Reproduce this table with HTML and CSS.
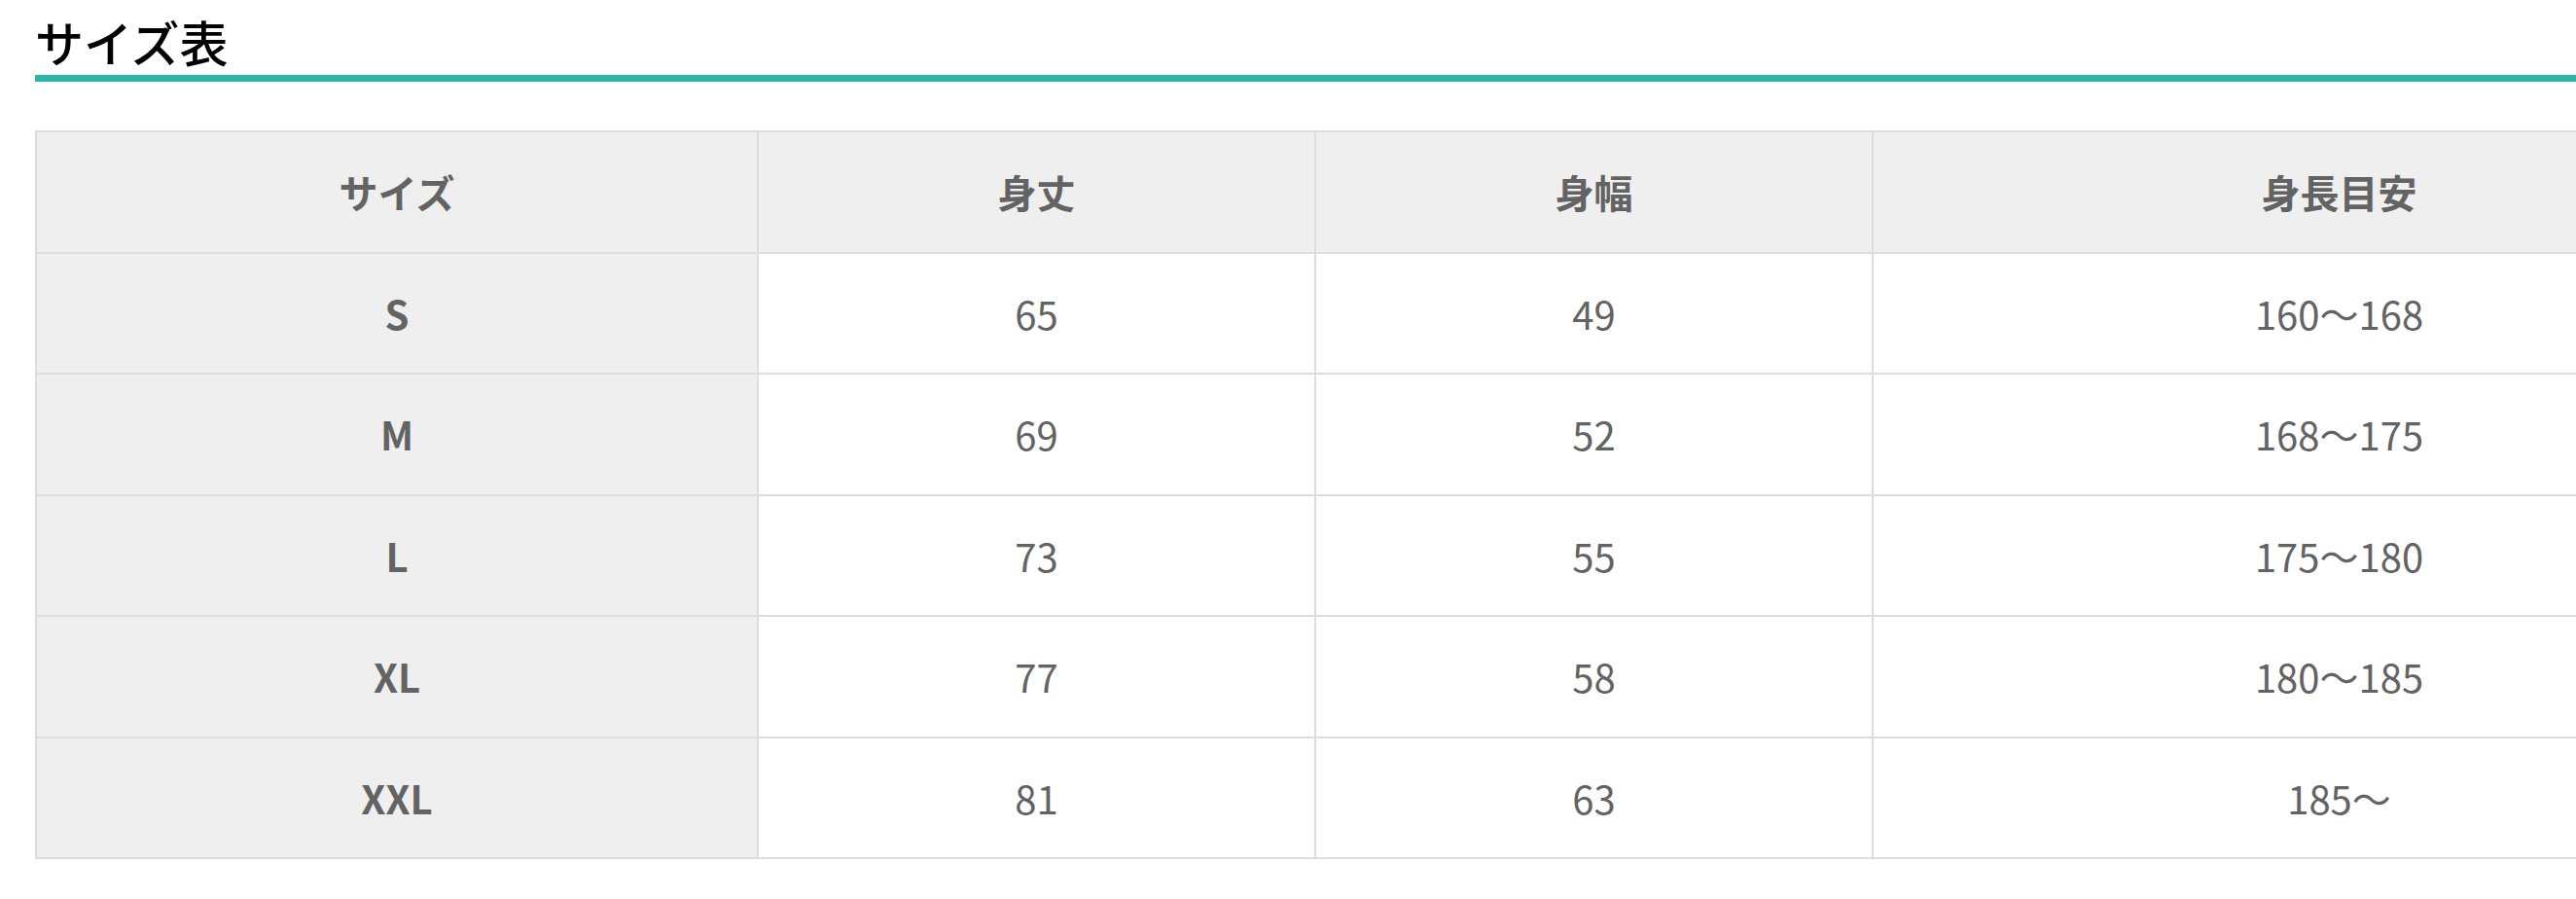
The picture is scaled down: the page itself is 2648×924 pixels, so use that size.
FILE: index.html
```html
<!DOCTYPE html>
<html lang="ja">
<head>
<meta charset="utf-8">
<title>サイズ表</title>
<link rel="stylesheet" href="styles.css">
</head>
<body>
<main class="page">
  <h2 class="section-title">サイズ表</h2>
  <table class="size-table">
    <colgroup>
      <col class="col-size">
      <col class="col-num">
      <col class="col-num">
      <col class="col-height">
    </colgroup>
    <thead>
      <tr>
        <th>サイズ</th>
        <th>身丈</th>
        <th>身幅</th>
        <th>身長目安</th>
      </tr>
    </thead>
    <tbody>
      <tr><th>S</th><td>65</td><td>49</td><td>160～168</td></tr>
      <tr><th>M</th><td>69</td><td>52</td><td>168～175</td></tr>
      <tr><th>L</th><td>73</td><td>55</td><td>175～180</td></tr>
      <tr><th>XL</th><td>77</td><td>58</td><td>180～185</td></tr>
      <tr><th>XXL</th><td>81</td><td>63</td><td>185～</td></tr>
    </tbody>
  </table>
</main>
</body>
</html>
```

FILE: styles.css
```css
html {
  overflow: hidden;
}
body {
  margin: 0;
  background: #ffffff;
  font-family: "Noto Sans CJK JP", "Noto Sans", sans-serif;
}
.page {
  padding: 8px 0 0 36px;
}
.section-title {
  margin: 0;
  font-size: 50px;
  font-weight: 500;
  line-height: 69px;
  color: #000000;
  border-bottom: 7px solid #2ab6a8;
}
.size-table {
  margin-top: 50px;
  width: 2847px;
  table-layout: fixed;
  border-collapse: collapse;
  color: #636363;
  font-size: 40px;
}
.col-size { width: 742px; }
.col-num { width: 573px; }
.col-height { width: 959px; }
.size-table th,
.size-table td {
  height: 122.5px;
  padding: 0;
  text-align: center;
  vertical-align: middle;
  border: 2px solid #dddddd;
}
.size-table th {
  background: #efefef;
  font-weight: 700;
}
.size-table td {
  background: #ffffff;
  font-weight: 400;
}
```
